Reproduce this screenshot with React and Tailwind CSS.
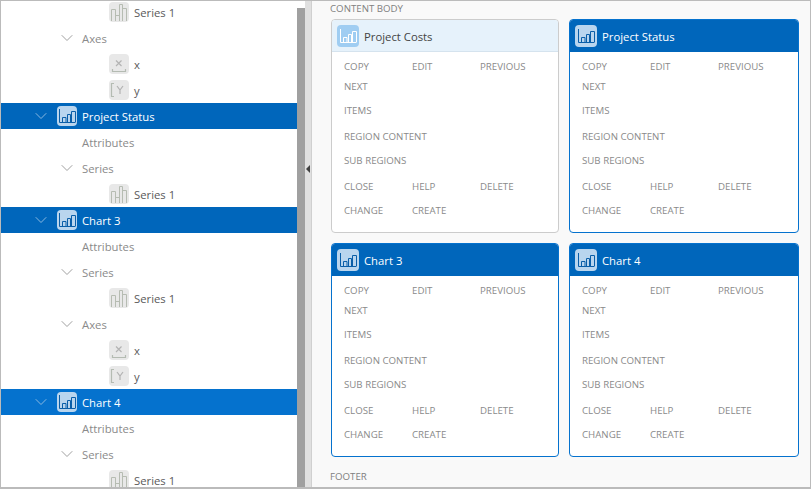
import { ChevronDown } from "lucide-react";

const tree = [
  { label: "Series 1", type: "series", height: "h-6 pb-[2px]" },
  { label: "Axes", type: "group" },
  { label: "x", type: "x" },
  { label: "y", type: "y" },
  { label: "Project Status", type: "chart", bg: "bg-[#0066bb]" },
  { label: "Attributes", type: "leaf" },
  { label: "Series", type: "group" },
  { label: "Series 1", type: "series" },
  { label: "Chart 3", type: "chart", bg: "bg-[#0066bb]" },
  { label: "Attributes", type: "leaf" },
  { label: "Series", type: "group" },
  { label: "Series 1", type: "series" },
  { label: "Axes", type: "group" },
  { label: "x", type: "x" },
  { label: "y", type: "y" },
  { label: "Chart 4", type: "chart", bg: "bg-[#0572ce]" },
  { label: "Attributes", type: "leaf" },
  { label: "Series", type: "group" },
  { label: "Series 1", type: "series" },
];

const cards = [
  { title: "Project Costs", active: true },
  { title: "Project Status" },
  { title: "Chart 3" },
  { title: "Chart 4" },
];

const BarsIcon = ({ color }) => (
  <svg width="17" height="14" viewBox="0 0 17 14" fill="none" stroke={color} strokeWidth="1">
    <path d="M.5 0V13.5H16.5" />
    <path d="M3.5 13V8.5H7V13M8.5 13V5.5H11.5V13M12.5 13V2.5H16.5V13" />
  </svg>
);

const SeriesIcon = () => (
  <div className="w-5 h-5 rounded-sm bg-[#e8e8e8] shrink-0">
    <svg width="20" height="20" viewBox="0 0 20 20" fill="none" stroke="#b6bcb2" strokeWidth="1">
      <path d="M2.5 19V7.5H6.5V19M6.5 19V13.5H10.5V19M10.5 19V2.5H13.5V19M13.5 19V6.5H17.5V19" />
    </svg>
  </div>
);

const AxisIcon = ({ type }) => (
  <div className="w-5 h-5 rounded-sm bg-[#e8e8e8] shrink-0">
    {type === "x" ? (
      <svg width="20" height="20" viewBox="0 0 20 20" fill="none" strokeWidth="1.2">
        <path d="M7 6.5L12.5 12M12.5 6.5L7 12" stroke="#b3b3b3" />
        <path d="M3.5 15v2.5H16.5V15" stroke="#b4bbb2" />
      </svg>
    ) : (
      <svg width="20" height="20" viewBox="0 0 20 20" fill="none" strokeWidth="1.2">
        <path d="M5 3.5H2.5V16.5H5" stroke="#b4bbb2" />
        <path d="M8 6L11 10L14 6M11 10V14" stroke="#b3b3b3" />
      </svg>
    )}
  </div>
);

const Chevron = ({ className }) => (
  <ChevronDown size={20} strokeWidth={1.2} className={className} />
);

const TreeRow = ({ item }) => {
  const height = item.height || "h-[26px]";

  if (item.type === "chart") {
    return (
      <div className={`${height} ${item.bg} flex items-center text-white text-[11.3px]`}>
        <Chevron className="ml-[30px] text-[#8ab8e0]" />
        <div className="ml-[6px] w-5 h-5 rounded-sm bg-[#b9d5ee] flex items-center justify-center">
          <BarsIcon color="#0a5ea8" />
        </div>
        <span className="ml-[5px] pt-[2px]">{item.label}</span>
      </div>
    );
  }
  if (item.type === "group") {
    return (
      <div className={`${height} flex items-center text-[11.3px] text-[#8a8a8a]`}>
        <Chevron className="ml-[56px] text-[#a0a0a0]" />
        <span className="ml-[5px] pt-[2px]">{item.label}</span>
      </div>
    );
  }
  if (item.type === "leaf") {
    return (
      <div className={`${height} flex items-center pl-[81px] text-[11.3px] text-[#8a8a8a]`}>
        <span className="pt-[2px]">{item.label}</span>
      </div>
    );
  }
  return (
    <div className={`${height} flex items-center pl-[108px] text-[11.3px] text-[#5a5a5a]`}>
      {item.type === "series" ? <SeriesIcon /> : <AxisIcon type={item.type} />}
      <span className="ml-[5px] pt-[2px]">{item.label}</span>
    </div>
  );
};

const LinkRow = ({ links, height }) => (
  <div className={`${height} grid grid-cols-[68px_68px_68px] items-center`}>
    {links.map((link) => (
      <span key={link}>{link}</span>
    ))}
  </div>
);

const Card = ({ title, active }) => (
  <div
    className={`h-[214px] rounded-sm border bg-white flex flex-col overflow-hidden ${
      active ? "border-[#cccccc]" : "border-[#0572ce]"
    }`}
  >
    <div
      className={`h-8 shrink-0 flex items-center px-[5px] text-[11.3px] ${
        active ? "pt-px bg-[#e6f2fb] border-b border-[#d5e3ee] text-[#444444]" : "bg-[#0066bb] text-white"
      }`}
    >
      <div
        className={`w-[22px] h-[22px] rounded-sm flex items-center justify-center ${
          active ? "bg-[#9fcdf2]" : "bg-[#b9d5ee]"
        }`}
      >
        <BarsIcon color={active ? "#ffffff" : "#0a5ea8"} />
      </div>
      <span className="ml-[5px] pt-[2px]">{title}</span>
    </div>
    <div className="pt-[5px] pl-[12px] text-[9.7px] text-[#8a8a8a]">
      <LinkRow height="h-5" links={["COPY", "EDIT", "PREVIOUS"]} />
      <LinkRow height="h-5" links={["NEXT"]} />
      <LinkRow height="h-7" links={["ITEMS"]} />
      <div className="h-6 flex items-center">REGION CONTENT</div>
      <div className="h-6 flex items-center">SUB REGIONS</div>
      <LinkRow height="h-7" links={["CLOSE", "HELP", "DELETE"]} />
      <LinkRow height="h-5" links={["CHANGE", "CREATE"]} />
    </div>
  </div>
);

export default function App() {
  return (
    <div
      className="w-[811px] h-[489px] overflow-hidden border border-[#bbbbbb] border-b-2 flex bg-white"
      style={{ fontFamily: '"Open Sans", sans-serif' }}
    >
      <div className="w-[296px] h-full overflow-hidden shrink-0">
        {tree.map((item, i) => (
          <TreeRow key={i} item={item} />
        ))}
      </div>
      <div className="w-2 h-full shrink-0 pt-[7px]">
        <div className="h-full bg-[#a0a0a0]" />
      </div>
      <div className="relative w-[7px] h-full shrink-0 bg-[#e0e0e0] border-r border-[#d0d0d0]">
        <div className="absolute left-[1px] top-[164px] w-0 h-0 border-y-[4px] border-y-transparent border-r-[4px] border-r-[#404040]" />
      </div>
      <div className="flex-1 bg-[#f9f9f9] pl-[18px]">
        <div className="h-[16px] mb-[2px] flex items-center text-[9.7px] text-[#808080]">CONTENT BODY</div>
        <div className="grid grid-cols-[228px_230px] gap-[10px] pl-px">
          {cards.map((card) => (
            <Card key={card.title} {...card} />
          ))}
        </div>
        <div className="mt-[13px] text-[9.7px] text-[#808080]">FOOTER</div>
      </div>
    </div>
  );
}
